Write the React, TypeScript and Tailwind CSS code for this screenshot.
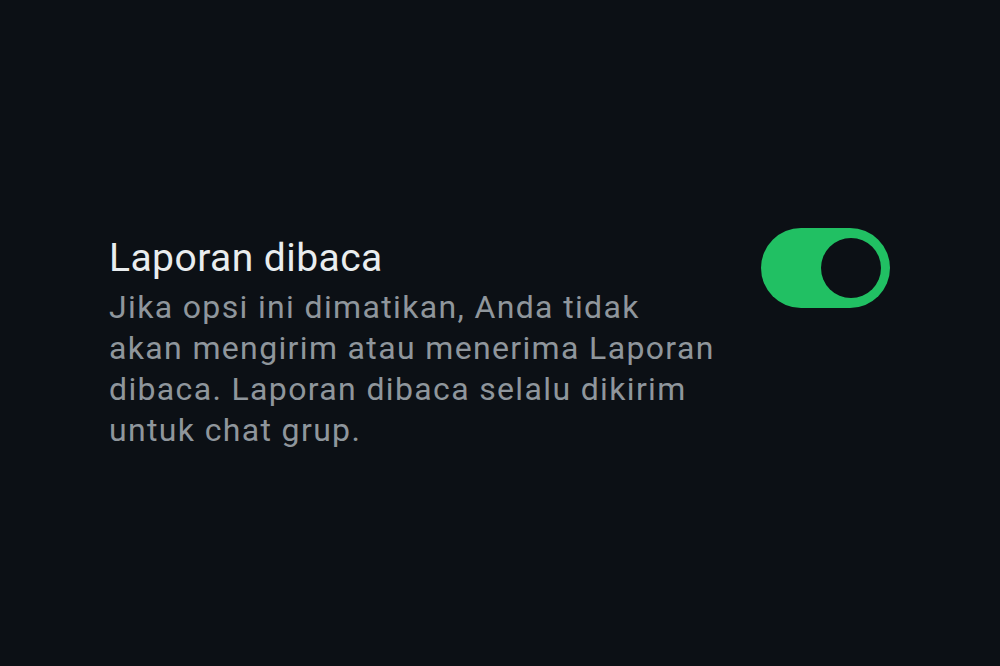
export default function App() {
  return (
    <div
      className="w-[1000px] h-[666px] bg-[#0c1015] flex items-start"
      style={{ fontFamily: "Roboto, sans-serif" }}
    >
      <div className="flex w-full items-start pl-[109px] pr-[110px] pt-[234px]">
        <div className="flex-1">
          <div className="text-[39px] leading-[48px] tracking-[0.45px] text-[#e9edef]">Laporan dibaca</div>
          <div className="mt-[5px] w-[640px] text-[32px] leading-[41px] tracking-[1.35px] text-[#8f969c]">
            Jika opsi ini dimatikan, Anda tidak
            <br />
            akan mengirim atau menerima Laporan
            <br />
            dibaca. Laporan dibaca selalu dikirim
            <br />
            untuk chat grup.
          </div>
        </div>
        <div className="mt-[-6px] w-[129px] h-[80px] rounded-full bg-[#21c063] flex items-center justify-end pr-[9px]">
          <div className="w-[60px] h-[60px] rounded-full bg-[#0c1015]" />
        </div>
      </div>
    </div>
  );
}
